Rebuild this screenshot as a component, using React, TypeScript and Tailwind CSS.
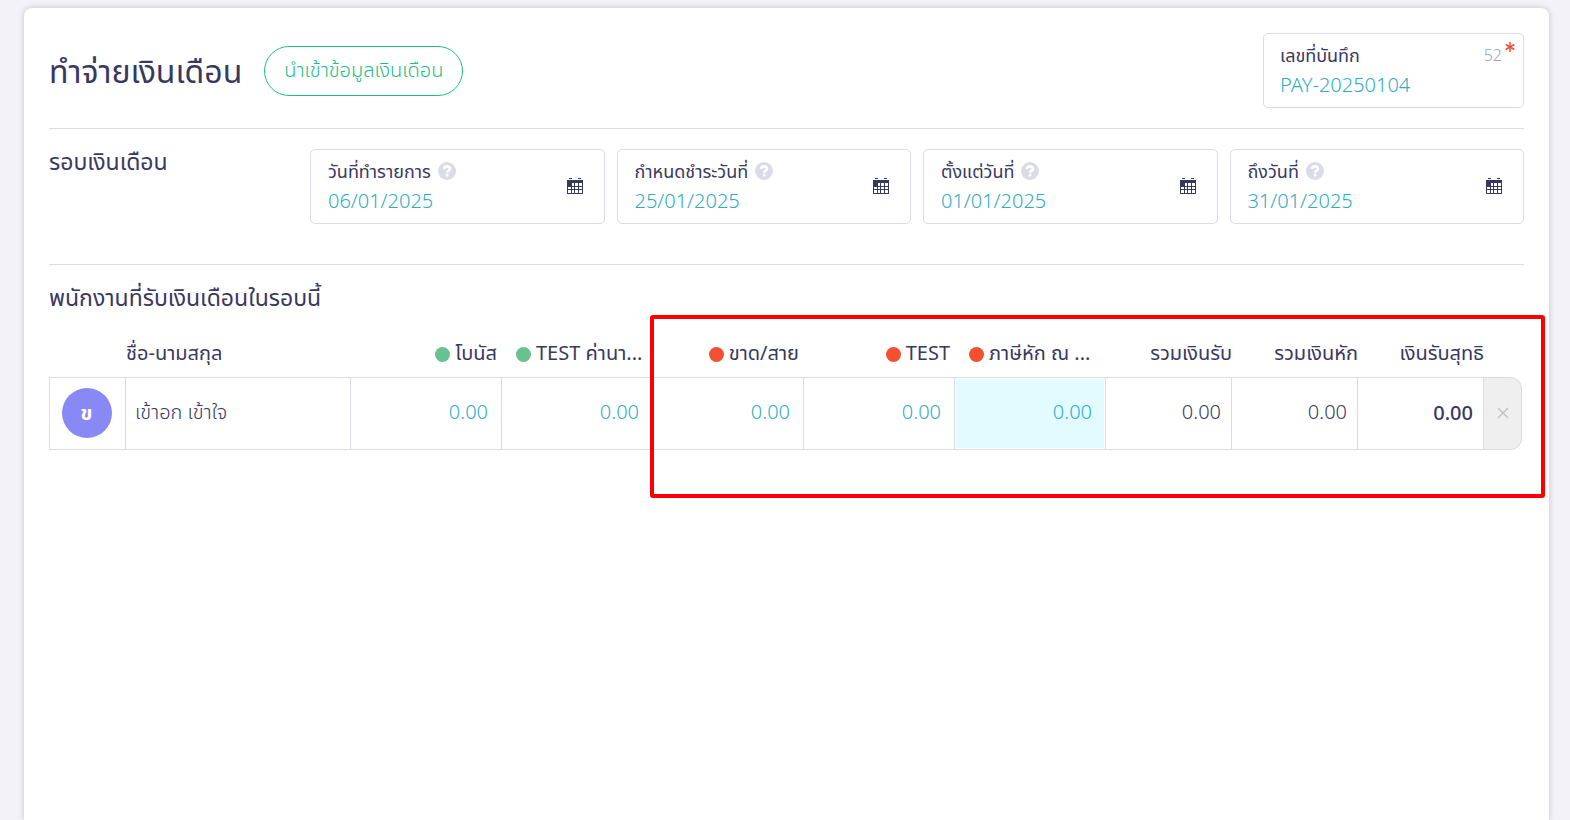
import React, { useState } from "react";
import clsx from "clsx";

interface DateFieldProps {
  id: string;
  label: string;
  initial: string;
}

interface Column {
  key: string;
  label: string;
  dot?: string;
  truncated?: boolean;
  editable?: boolean;
}

const columns: Column[] = [
  { key: "bonus", label: "โบนัส", dot: "bg-[#68c28f]", editable: true },
  {
    key: "position",
    label: "TEST ค่านา...",
    dot: "bg-[#68c28f]",
    truncated: true,
    editable: true,
  },
  { key: "absent", label: "ขาด/สาย", dot: "bg-[#f25030]", editable: true },
  { key: "test", label: "TEST", dot: "bg-[#f25030]", editable: true },
  {
    key: "tax",
    label: "ภาษีหัก ณ ...",
    dot: "bg-[#f25030]",
    truncated: true,
    editable: true,
  },
  { key: "income", label: "รวมเงินรับ" },
  { key: "deduct", label: "รวมเงินหัก" },
  { key: "net", label: "เงินรับสุทธิ" },
];

const CalendarIcon = () => (
  <svg width="16" height="16" viewBox="0 0 16 16" aria-hidden="true">
    <path
      fill="#38385f"
      fillRule="evenodd"
      d="M2 0h3v1H2zM11 0h3v1h-3zM0 2h16v14H0zM5 5v3h2V5zM8 5v3h3V5zM12 5v3h3V5zM1 9v2h3V9zM5 9v2h2V9zM8 9v2h3V9zM12 9v2h3V9zM1 12v3h3v-3zM5 12v3h2v-3zM8 12v3h3v-3zM12 12v3h3v-3z"
    />
  </svg>
);

const HelpIcon = () => (
  <svg width="18" height="18" viewBox="0 0 18 18" aria-hidden="true">
    <circle cx="9" cy="9" r="9" fill="#dbdbe8" />
    <path
      d="M6 7C6.200 5.200 7.300 4.400 9 4.400c1.800 0 3 .9 3 2.300 0 1.900-2.800 1.900-2.800 4"
      fill="none"
      stroke="#fff"
      strokeWidth="2.600"
    />
    <rect x="7.700" y="11.800" width="2.800" height="2.800" rx="1.200" fill="#fff" />
  </svg>
);

const DateField: React.FC<DateFieldProps> = ({ id, label, initial }) => {
  const [value, setValue] = useState(initial);

  return (
    <div className="flex h-[75px] min-w-0 items-center rounded-[5px] border border-[#dbdbe8] pl-[17px] pr-[21px]">
      <div className="min-w-0 flex-1">
        <div className="flex h-7 items-center gap-[7px]">
          <label htmlFor={id} className="whitespace-nowrap text-lg">
            {label}
          </label>
          <HelpIcon />
        </div>
        <input
          id={id}
          value={value}
          onChange={(e) => setValue(e.target.value)}
          className="block h-8 w-full bg-transparent text-xl font-light text-[#31adc3] outline-none"
        />
      </div>
      <button type="button" aria-label={label} className="pb-0.5">
        <CalendarIcon />
      </button>
    </div>
  );
};

const PayrollTable = () => {
  const [amounts, setAmounts] = useState<Record<string, string>>({});

  return (
    <table className="w-full table-fixed border-separate border-spacing-0">
      <colgroup>
        <col className="w-[77px]" />
        <col />
        {columns.map((col) => (
          <col
            key={col.key}
            className={col.editable ? "w-[151px]" : "w-[126px]"}
          />
        ))}
        <col className="w-[38px]" />
      </colgroup>
      <thead>
        <tr className="h-12 text-xl whitespace-nowrap">
          <td />
          <th className="text-left font-normal">ชื่อ-นามสกุล</th>
          {columns.map((col) => (
            <th key={col.key} className="font-normal">
              <div
                className={clsx(
                  "flex items-center gap-[5px]",
                  col.truncated ? "justify-start pl-[14px]" : "justify-end",
                  col.dot && !col.truncated && "pr-[5px]"
                )}
              >
                {col.dot && (
                  <span
                    className={clsx(
                      "mt-[3px] size-[15px] shrink-0 rounded-full",
                      col.dot
                    )}
                  />
                )}
                {col.label}
              </div>
            </th>
          ))}
          <td />
        </tr>
      </thead>
      <tbody>
        <tr className="h-[73px] text-xl font-light">
          <td className="border border-[#dbdbe8] pr-0.5 pb-0.5">
            <div className="mx-auto flex size-[50px] items-center justify-center rounded-full bg-[#8989f6] text-xl font-bold text-white">
              ข
            </div>
          </td>
          <td className="border-y border-r border-[#dbdbe8] pb-1 pl-[9px]">
            เข้าอก เข้าใจ
          </td>
          {columns.map((col) => (
            <td
              key={col.key}
              className={clsx(
                "border-y border-r border-[#dbdbe8] text-right",
                col.editable ? "p-px" : "pr-[10px]",
                col.key === "net" ? "pb-0.5 font-medium" : !col.editable && "pb-1"
              )}
            >
              {col.editable ? (
                <input
                  aria-label={col.label}
                  value={amounts[col.key] ?? "0.00"}
                  onChange={(e) =>
                    setAmounts({ ...amounts, [col.key]: e.target.value })
                  }
                  className={clsx(
                    "block h-[69px] w-full pr-[12px] pb-1 text-right text-[#31adc3] outline-none",
                    col.key === "tax" && "bg-[#e1fbff]"
                  )}
                />
              ) : (
                "0.00"
              )}
            </td>
          ))}
          <td className="rounded-r-xl border-y border-r border-[#dbdbe8] bg-[#efefef]">
            <button
              type="button"
              aria-label="ลบ"
              className="flex h-full w-full items-center justify-center pb-0.5"
            >
              <svg width="12" height="12" viewBox="0 0 12 12">
                <path
                  d="M1 1l10 10M11 1L1 11"
                  stroke="#c2c2c4"
                  strokeWidth="1.500"
                />
              </svg>
            </button>
          </td>
        </tr>
      </tbody>
    </table>
  );
};

const App = () => {
  const [docNo, setDocNo] = useState("PAY-20250104");

  return (
    <div className="min-h-screen bg-[#f3f2f8] px-6 pt-2 font-['Noto_Sans','Noto_Sans_Thai',sans-serif] text-[#38385f]">
      <main className="mr-[-3px] min-h-[calc(100vh-8px)] rounded-t-lg bg-white px-[25px] pt-[25px] shadow-[0_0_6px_rgba(0,0,0,0.2)]">
        <header className="flex items-start justify-between border-b border-[#dbdbe8] pb-5">
          <div className="flex items-center gap-[22px] pt-[13px]">
            <h1 className="text-[32px] leading-[48px]">ทำจ่ายเงินเดือน</h1>
            <button
              type="button"
              className="h-[50px] rounded-full border border-[#1bbf85] px-[19px] pb-0.5 text-xl font-light text-[#1bbf85]"
            >
              นำเข้าข้อมูลเงินเดือน
            </button>
          </div>
          <div className="relative h-[75px] w-[261px] rounded-[5px] border border-[#dbdbe8] px-4 pt-[7px]">
            <div className="flex h-7 items-center justify-between">
              <label htmlFor="doc-no" className="text-lg">
                เลขที่บันทึก
              </label>
              <span className="pr-[5px] text-base font-light text-[#9c9cb0]">
                52
              </span>
            </div>
            <input
              id="doc-no"
              value={docNo}
              onChange={(e) => setDocNo(e.target.value)}
              className="block h-[30px] w-full bg-transparent text-xl font-light text-[#31adc3] outline-none"
            />
            <svg
              className="absolute right-2 top-2"
              width="10"
              height="10"
              viewBox="0 0 10 10"
              aria-hidden="true"
            >
              <path
                d="M5 0v10M.7 2.500l8.600 5M9.300 2.500l-8.600 5"
                stroke="#f25030"
                strokeWidth="1.500"
              />
            </svg>
          </div>
        </header>

        <section className="flex border-b border-[#dbdbe8] pt-5 pb-10">
          <h2 className="w-[261px] shrink-0 text-[23px] leading-6">
            รอบเงินเดือน
          </h2>
          <div className="grid flex-1 grid-cols-4 gap-3">
            <DateField
              id="issue-date"
              label="วันที่ทำรายการ"
              initial="06/01/2025"
            />
            <DateField
              id="due-date"
              label="กำหนดชำระวันที่"
              initial="25/01/2025"
            />
            <DateField
              id="from-date"
              label="ตั้งแต่วันที่"
              initial="01/01/2025"
            />
            <DateField id="to-date" label="ถึงวันที่" initial="31/01/2025" />
          </div>
        </section>

        <section className="relative pt-4">
          <h2 className="text-[23px] leading-8">
            พนักงานที่รับเงินเดือนในรอบนี้
          </h2>
          <div className="pt-4 pr-[2px]">
            <PayrollTable />
          </div>
          <div className="pointer-events-none absolute top-[50px] right-[-21px] h-[183px] w-[895px] rounded-[3px] border-4 border-[#ff0000]" />
        </section>
      </main>
    </div>
  );
};

export default App;
